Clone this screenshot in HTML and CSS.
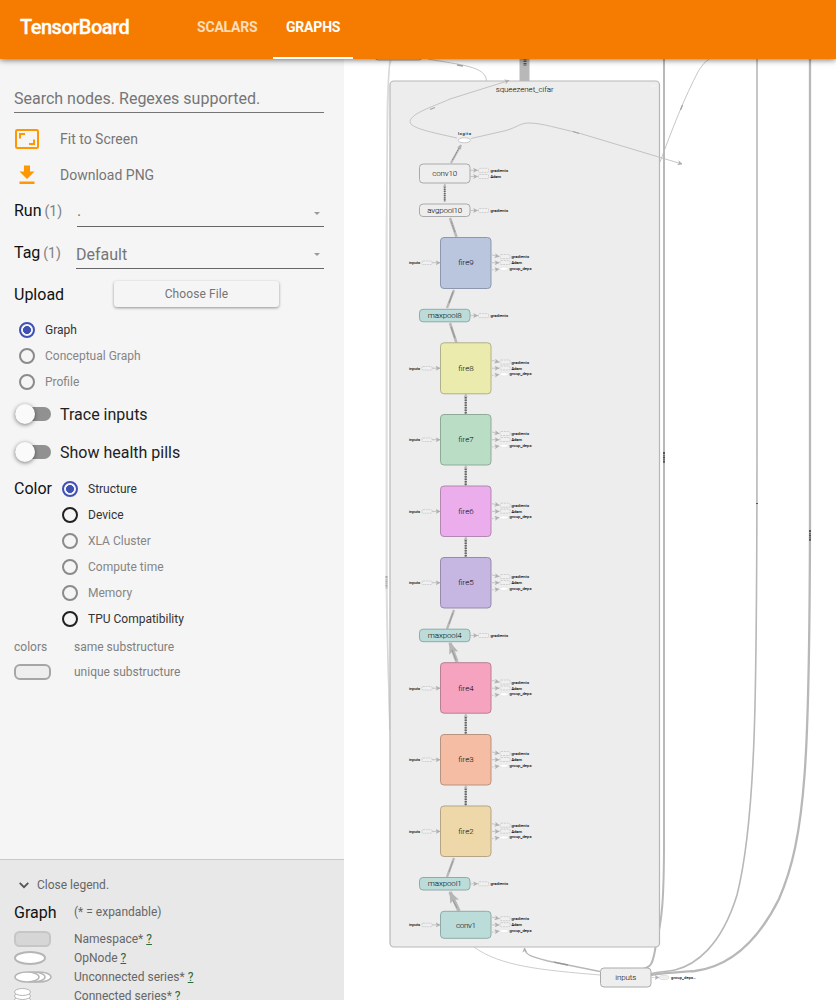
FILE: index.html
```html
<!DOCTYPE html>
<html lang="en">
<head>
<meta charset="utf-8">
<title>TensorBoard</title>
<link rel="stylesheet" href="styles.css">
</head>
<body>
<header class="toolbar">
  <h1 class="brand"><span>TensorBoard</span></h1>
  <nav class="tabs"><a class="tab">SCALARS</a><a class="tab active">GRAPHS</a></nav>
</header>
<div class="main">
<aside class="sidebar">
  <div class="search">Search nodes. Regexes supported.</div>
  <div class="action first">
    <svg width="26" height="22" viewBox="0 0 26 22" fill="none" stroke="#ff9800" stroke-width="2"><rect x="2" y="2" width="22" height="18" rx="1.3"/><path d="M6 10.500V6h5M20 11.500V16h-5"/></svg>
    <span>Fit to Screen</span>
  </div>
  <div class="action">
    <svg width="26" height="22" viewBox="0 0 26 22" fill="#ff9800"><path d="M10 1.500h6v6h4.500L13 15 5.500 7.500H10zM5.500 17.500h15V20h-15z"/></svg>
    <span>Download PNG</span>
  </div>
  <div class="field run"><label>Run <small>(1)</small></label><div class="select"><span class="dot">.</span><i class="caret"></i></div></div>
  <div class="field tag"><label>Tag <small>(1)</small></label><div class="select"><span>Default</span><i class="caret"></i></div></div>
  <div class="upload"><span>Upload</span><button class="choose">Choose File</button></div>
  <div class="radios">
    <div class="radio on"><i></i><span>Graph</span></div>
    <div class="radio off"><i></i><span>Conceptual Graph</span></div>
    <div class="radio off"><i></i><span>Profile</span></div>
  </div>
  <div class="toggle"><i></i><span>Trace inputs</span></div>
  <div class="toggle"><i></i><span>Show health pills</span></div>
  <div class="color">
    <span class="color-label">Color</span>
    <div>
      <div class="radio on"><i></i><span>Structure</span></div>
      <div class="radio"><i></i><span>Device</span></div>
      <div class="radio off"><i></i><span>XLA Cluster</span></div>
      <div class="radio off"><i></i><span>Compute time</span></div>
      <div class="radio off"><i></i><span>Memory</span></div>
      <div class="radio"><i></i><span>TPU Compatibility</span></div>
    </div>
  </div>
  <div class="key"><span class="sym">colors</span><span>same substructure</span></div>
  <div class="key"><span class="sym"><i class="unique"></i></span><span>unique substructure</span></div>
  <section class="legend">
    <div class="close"><svg width="10" height="7" viewBox="0 0 10 7" fill="none" stroke="#555" stroke-width="1.800"><path d="M.7.8 5 5.200 9.300.8"/></svg><span>Close legend.</span></div>
    <div class="legend-title"><span class="sym">Graph</span><span>(* = expandable)</span></div>
    <div class="entry"><span class="sym"><svg width="38" height="16"><rect x="1" y="1" width="35" height="14" rx="4.500" fill="#d6d6d6" stroke="#c6c6c6" stroke-width="2"/></svg></span><span>Namespace* <u>?</u></span></div>
    <div class="entry"><span class="sym"><svg width="38" height="16"><ellipse cx="16" cy="8" rx="15" ry="6" fill="#fff" stroke="#b5b5b5" stroke-width="2"/></svg></span><span>OpNode <u>?</u></span></div>
    <div class="entry"><span class="sym"><svg width="39" height="16" fill="#fff" stroke="#b5b5b5" stroke-width="1.500"><ellipse cx="25" cy="8" rx="12" ry="5"/><ellipse cx="19" cy="8" rx="12" ry="5"/><ellipse cx="13" cy="8" rx="12" ry="5"/></svg></span><span>Unconnected series* <u>?</u></span></div>
    <div class="entry"><span class="sym"><svg width="38" height="19" fill="#fff" stroke="#b5b5b5"><ellipse cx="8.500" cy="14" rx="8" ry="3.500"/><ellipse cx="8.500" cy="10" rx="8" ry="3.500"/><ellipse cx="8.500" cy="6" rx="8" ry="3.500"/></svg></span><span>Connected series* <u>?</u></span></div>
  </section>
</aside>
<main class="canvas">
<svg class="graph" width="492" height="941" viewBox="344 59 492 941">
  <defs>
    <marker id="tip" viewBox="0 0 8 8" refX="7" refY="4" markerWidth="5" markerHeight="5" markerUnits="userSpaceOnUse" orient="auto"><path d="M0 0 8 4 0 8 2 4z" fill="#b0b0b0"/></marker>
    <marker id="bigtip" viewBox="0 0 10 10" refX="9" refY="5" markerWidth="12" markerHeight="12" markerUnits="userSpaceOnUse" orient="auto"><path d="M0 1 10 5 0 9 2 5z" fill="#b5b5b5"/></marker>
    <g id="grad">
      <path class="thin" d="M0 0h7" marker-end="url(#tip)"/>
      <rect class="ghost" x="8" y="-2" width="10" height="4" rx="1"/>
      <text class="note" x="20" y="1.500" textLength="17.500">gradients</text>
    </g>
    <g id="adam">
      <path class="thin" d="M0 0h7" marker-end="url(#tip)"/>
      <rect class="ghost" x="8" y="-2" width="10" height="4" rx="1"/>
      <text class="note" x="20" y="1.500" textLength="10.500">Adam</text>
    </g>
    <g id="aux">
      <text class="note" x="-57" y="1.500" textLength="11">inputs</text>
      <rect class="ghost" x="-44" y="-1.500" width="10" height="3.500" rx="1"/>
      <path class="thin" d="M-34 .2h8" marker-end="url(#tip)"/>
      <path class="thin" d="M26-7.500 33-6" marker-end="url(#tip)"/>
      <path class="thin" d="M26 .2h7" marker-end="url(#tip)"/>
      <path class="thin dashed" d="M26 7.500 33 6.500" marker-end="url(#tip)"/>
      <rect class="ghost" x="34" y="-8" width="10" height="4" rx="1"/>
      <rect class="ghost" x="34" y="-2" width="10" height="4" rx="1"/>
      <ellipse cx="38" cy="6.300" rx="4" ry="1.700" fill="#fff" stroke="#ddd" stroke-width=".5"/>
      <text class="note" x="45.500" y="-4.400" textLength="17.500">gradients</text>
      <text class="note" x="45.500" y="1.500" textLength="10.500">Adam</text>
      <text class="note" x="43.500" y="7.300" textLength="22">group_deps</text>
    </g>
    <g id="link"><path class="edge" d="M0 0v21" stroke-width="1.500"/><path d="M0 3v18" stroke="#666" stroke-width="2.300" stroke-dasharray="1.500 1"/><path d="M-2 3 0-.5 2 3" fill="#bbb"/></g>
  </defs>

  <g class="edge">
    <path d="M390 58C387 90 387 100 387 200V580C387 640 389 690 390 730" stroke="#ddd" stroke-width="1.500"/>
    <path d="M392 60C389 64 389 70 388.500 90L386 230V580C386.500 640 389 690 389.500 730" stroke="#d2d2d2" stroke-width=".7"/>
    <path d="M428 59C460 65 486 66 486.500 81" stroke-width=".8"/>
    <path d="M524.500 58v23" stroke-width="10"/>
    <path d="M664 58V840C664 900 662 921 656 944C653 966 650 967 643 969" stroke-width="2"/>
    <path d="M757 58V430C757 700 756 820 737 895C721 947 695 965 675 970C667 972 660 971 650 974" stroke-width="1.600"/>
    <path d="M810 58V500C810 760 806 837 779 899C755 947 725 967 695 971C681 972 664 973 650 975" stroke-width="2.300"/>
    <path d="M474 947C500 966 540 970 600 975" stroke-width=".7"/>
    <path d="M600 971.500 548 961C532 957 525 955 524.500 948" stroke-width="1.300" marker-end="url(#tip)"/>
  </g>
  <rect x="375" y="50" width="47" height="10" rx="3" fill="#eee" stroke="#aaa"/>
  <path d="M525 58v8" stroke="#555" stroke-width="3" stroke-dasharray="1.500 1"/>
  <rect x="390" y="81" width="269.500" height="866" rx="4" fill="#ededed" stroke="#b7b7b7" stroke-width="1.200"/>
  <rect x="651" y="85.500" width="5" height="1" fill="#fff" opacity=".6"/>
  <text class="name" x="524.700" y="92" textLength="58">squeezenet_cifar</text>

  <g class="edge" stroke-width=".8">
    <path d="M457 138C430 132 410 128 410 121.500C411 113 435 106 450 99L509 80.500" marker-end="url(#tip)"/>
    <path d="M471 138.500 506 130.500C518 127 520 123 529 123C542 123 560 129 577 132.500L682 164" marker-end="url(#tip)"/>
    <path d="M660 162C672 130 684 98 699 70Q704 62 709 59"/>
    <path d="M573 131.500 579 133.500M430 109.500 435 107.500M680.500 110 682.500 105M457 65 463 66" stroke="#a5a5a5" stroke-width="1.300"/>
    <path d="M554 962.200 568 965" stroke="#999" stroke-width="1.300"/>
  </g>
  <ellipse cx="464.300" cy="140.300" rx="6.200" ry="2.500" fill="#fff" stroke="#b5b5b5" stroke-width=".7"/>
  <text class="note" x="458" y="134.500" textLength="13">logits</text>

  <g class="edge">
    <path d="M451 163 461 145" stroke-width="2" marker-end="url(#tip)"/><path d="M452.500 160 459 148" stroke="#888" stroke-dasharray="1.500 1"/>
    <path d="M456.500 237 450 218" stroke-width="2.500"/><path d="M455 232 451 221" stroke="#999" stroke-width="1.300" stroke-dasharray="2 .8"/>
    <path d="M447 308 454 290" stroke-width="2.300"/><path d="M449 303 453 292" stroke="#999" stroke-width="1.300"/>
    <path d="M456.500 343 450 323" stroke-width="2.500"/><path d="M455 338 451 327" stroke="#999" stroke-width="1.300"/>
    <path d="M447 629 454 610" stroke-width="2.300"/><path d="M449 624 453 613" stroke="#999"/>
    <path d="M457 662 450 643" stroke-width="3.500" marker-end="url(#bigtip)"/><path d="M456 660 452 650" stroke="#999"/>
    <path d="M447 877 454 858" stroke-width="2.300"/><path d="M449 872 453 861" stroke="#999"/>
    <path d="M459 911 450 892" stroke-width="3.500" marker-end="url(#bigtip)"/><path d="M457 908 453 900" stroke="#999"/>
  </g>
  <use href="#link" transform="translate(444.700 184) scale(.85)"/>
  <use href="#link" x="465.700" y="394"/><use href="#link" x="465.700" y="465.500"/><use href="#link" x="465.700" y="537"/>
  <use href="#link" x="465.700" y="714"/><use href="#link" x="465.700" y="785.500"/>

  <g class="box">
    <rect x="419.500" y="164" width="50.500" height="19" rx="3.500" fill="#eee" stroke="#aaa"/>
    <rect x="419.500" y="204" width="50.500" height="12.500" rx="3.500" fill="#eee" stroke="#aaa"/>
    <rect x="419.500" y="309.300" width="50.500" height="12.500" rx="3.500" fill="#bcdcda" stroke="#8faaa8"/>
    <rect x="419.500" y="629.200" width="50.500" height="12.500" rx="3.500" fill="#bcdcda" stroke="#8faaa8"/>
    <rect x="419.500" y="877.500" width="50.500" height="12.500" rx="3.500" fill="#bcdcda" stroke="#8faaa8"/>
    <rect x="440.500" y="237.500" width="50.500" height="51" rx="3.500" fill="#bac5de" stroke="#8d98ae"/>
    <rect x="440.500" y="342.800" width="50.500" height="51" rx="3.500" fill="#ebebad" stroke="#b0b18c"/>
    <rect x="440.500" y="414.500" width="50.500" height="50.500" rx="3.500" fill="#badec5" stroke="#8fab98"/>
    <rect x="440.500" y="486" width="50.500" height="50.500" rx="3.500" fill="#ebadeb" stroke="#b188b1"/>
    <rect x="440.500" y="557.500" width="50.500" height="50.500" rx="3.500" fill="#c6b6e2" stroke="#978bac"/>
    <rect x="440.500" y="662.700" width="50.500" height="50.500" rx="3.500" fill="#f6a3bf" stroke="#b87f94"/>
    <rect x="440.500" y="734.500" width="50.500" height="50.500" rx="3.500" fill="#f5bda3" stroke="#b8937f"/>
    <rect x="440.500" y="806" width="50.500" height="50.500" rx="3.500" fill="#eed8a9" stroke="#b3a586"/>
    <rect x="440.500" y="911.300" width="50.500" height="27" rx="3.500" fill="#bcdcda" stroke="#8faaa8"/>
    <rect x="600.500" y="968" width="50.500" height="19" rx="3.500" fill="#eee" stroke="#aaa"/>
  </g>
  <text class="name" x="444.800" y="176.300" textLength="25">conv10</text><text class="name" x="444.800" y="213" textLength="35">avgpool10</text>
  <text class="name" x="444.800" y="318.300" textLength="34">maxpool8</text><text class="name" x="444.800" y="638.200" textLength="34">maxpool4</text><text class="name" x="444.800" y="886.300" textLength="34">maxpool1</text>
  <text class="name" x="466" y="265" textLength="15.500">fire9</text><text class="name" x="466" y="371" textLength="15.500">fire8</text><text class="name" x="466" y="442" textLength="15.500">fire7</text><text class="name" x="466" y="514" textLength="15.500">fire6</text>
  <text class="name" x="466" y="585" textLength="15.500">fire5</text><text class="name" x="466" y="691" textLength="15.500">fire4</text><text class="name" x="466" y="762" textLength="15.500">fire3</text><text class="name" x="466" y="834" textLength="15.500">fire2</text>
  <text class="name" x="466" y="928" textLength="20">conv1</text><text class="name" x="625.800" y="980" textLength="21">inputs</text>

  <use href="#grad" x="470.500" y="170.300"/><use href="#adam" x="470.500" y="176.500"/><use href="#grad" x="470.500" y="210.500"/>
  <use href="#grad" x="470.500" y="315.600"/><use href="#grad" x="470.500" y="635.500"/><use href="#grad" x="470.500" y="883.800"/>
  <use href="#aux" x="466" y="262.500"/><use href="#aux" x="466" y="368"/><use href="#aux" x="466" y="439.500"/><use href="#aux" x="466" y="511.200"/><use href="#aux" x="466" y="582.500"/>
  <use href="#aux" x="466" y="688"/><use href="#aux" x="466" y="759.500"/><use href="#aux" x="466" y="831.200"/><use href="#aux" x="466" y="924.700"/>
  <path class="thin dashed" d="M652 977.500h7" marker-end="url(#tip)"/><ellipse cx="664" cy="977.500" rx="5" ry="2.200" fill="#eee" stroke="#ccc" stroke-width=".5"/>
  <text class="note" x="671" y="979" textLength="25">group_deps…</text>
  <g stroke="#555" stroke-width="2" stroke-dasharray="2 .8 1 .6"><path d="M664 452v11"/><path d="M810 530v11"/><path d="M386.500 576v13" stroke="#aaa"/><path d="M756 503.500h2" stroke-width="1" stroke-dasharray="none"/></g>
</svg>
</main>
</div>
</body>
</html>
```
FILE: styles.css
```css
* { box-sizing: border-box; }
body { margin: 0; width: 836px; height: 1000px; overflow: hidden; font-family: Roboto, sans-serif; color: #212121; background: #fff; display: flex; flex-direction: column; }
.toolbar { flex: none; height: 59px; background: #f57c00; color: #fff; display: flex; box-shadow: 0 1px 6px rgba(0,0,0,.55); position: relative; z-index: 2; }
.brand { margin: 0; width: 183px; padding-left: 20px; font-size: 20px; font-weight: 500; line-height: 55px; letter-spacing: -.5px; -webkit-text-stroke: .3px; }
.tabs { display: flex; }
.tab { padding: 0 14px; line-height: 55px; font-size: 14px; font-weight: 700; letter-spacing: -.2px; color: #fddcb8; }
.tab.active { padding-left: 13px; color: #fff; width: 80px; border-bottom: 2px solid #fff; }
.tab:first-child { width: 90px; }
.main { flex: 1; min-height: 0; display: flex; }
.sidebar { width: 344px; background: #f5f5f5; display: flex; flex-direction: column; }
.sidebar > * { flex: none; }
.canvas { width: 492px; background: #fff; }
.graph { display: block; }

.search { margin: 20px 20px 0 14px; height: 34px; line-height: 39px; border-bottom: 1px solid #757575; font-size: 16px; color: #757575; }
.action { height: 36px; padding-left: 14px; display: flex; align-items: center; gap: 20px; font-size: 14px; color: #757575; }
.action.first { margin-top: 8px; }
.field { display: flex; justify-content: space-between; padding: 0 20px 0 14px; font-size: 16px; color: #111; }
.field small { font-size: 14px; color: #808080; margin-left: -1px; }
.run { height: 39px; line-height: 36px; }
.tag { height: 43px; line-height: 42px; }
.select { display: flex; justify-content: space-between; align-items: center; border-bottom: 1px solid #666; color: #757575; }
.run .select { width: 247px; height: 34px; }
.dot { padding-top: 2px; }
.tag .select { width: 248px; height: 37px; line-height: 46px; }
.tag .select span { align-self: flex-start; }
.caret { width: 0; border: 3.5px solid transparent; border-top-color: #999; border-bottom: 0; margin: 8px 4px 0 0; }
.upload { height: 38px; padding-left: 14px; display: flex; align-items: center; font-size: 16px; color: #111; }
.upload span { width: 100px; }
.choose { width: 165px; height: 26px; padding: 0; border: 0; border-radius: 3px; background: #f5f5f5; color: #757575; font: 12px Roboto, sans-serif; letter-spacing: .1px; box-shadow: 0 1px 3px rgba(0,0,0,.4); }
.radios { margin-top: 4px; padding-left: 19px; }
.radio { height: 26px; display: flex; align-items: center; gap: 10px; font-size: 12px; color: #333; }
.radio i { width: 16px; height: 16px; border: 2px solid #212121; border-radius: 50%; }
.radio.on i { border-color: #3f51b5; background: radial-gradient(circle, #3f51b5 3.7px, transparent 4.3px); }
.radio.off { color: #858585; }
.radio.off i { border-color: #8b8b8b; }
.toggle { height: 38px; padding-left: 15px; display: flex; align-items: center; gap: 9px; font-size: 16px; }
.toggle i { width: 36px; height: 14px; border-radius: 7px; background: #919191; display: flex; align-items: center; }
.toggle i::before { content: ""; width: 20px; height: 20px; border-radius: 50%; background: #fafafa; box-shadow: 0 1px 4px rgba(0,0,0,.5); }
.color { margin-top: 5px; padding-left: 14px; display: flex; font-size: 16px; }
.color-label { width: 48px; line-height: 26px; color: #111; }
.key { height: 25px; padding-left: 14px; display: flex; align-items: center; font-size: 12px; color: #808080; }
.color + .key { margin-top: 2px; }
.sym { width: 60px; flex: none; display: flex; align-items: center; }
.unique { width: 37px; height: 16px; border: 2px solid #a6a6a6; border-radius: 6px; background: #eee; }
.sidebar > .legend { margin-top: auto; height: 141px; overflow: hidden; border-top: 1px solid #c9c9c9; background: #e8e8e8; padding: 12px 0 0 14px; font-size: 12px; color: #666; }
.close { height: 26px; display: flex; align-items: center; gap: 8px; padding-left: 5px; }
.legend-title { height: 28px; display: flex; align-items: center; margin-bottom: 3px; }
.legend-title .sym { font-size: 16px; color: #111; }
.entry { height: 19px; display: flex; align-items: center; }
.entry u { color: #286b35; }

.graph text { font-family: Roboto, sans-serif; }
.name { font-size: 8px; font-weight: 300; text-anchor: middle; fill: #000; }
.note { font-size: 4px; fill: #000; stroke: #000; stroke-width: .08; }
.edge { fill: none; stroke: #b8b8b8; }
.thin { fill: none; stroke: #aaa; stroke-width: .6; }
.dashed { stroke-dasharray: 1.5 1; }
.ghost { fill: #f0f0f0; stroke: #bbb; stroke-width: .6; stroke-dasharray: 2 .8; }
.box rect { stroke-width: 1; }
```
